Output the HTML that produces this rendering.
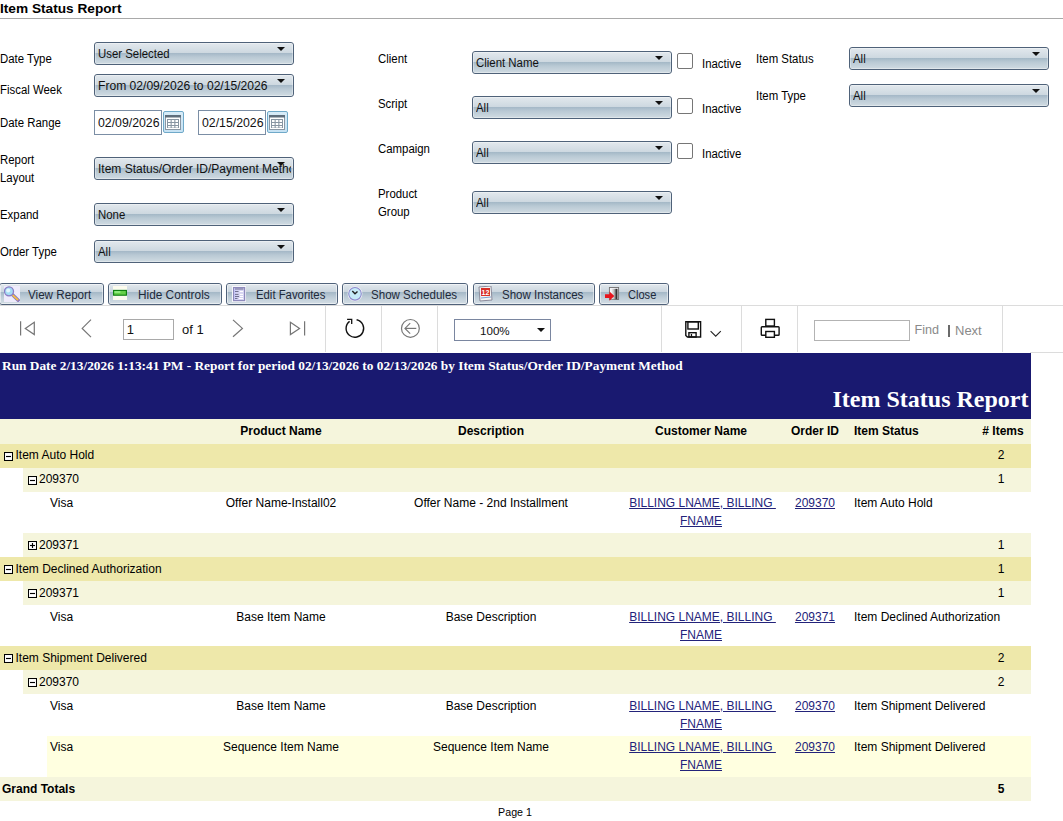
<!DOCTYPE html><html><head><meta charset="utf-8"><style>
*{margin:0;padding:0;box-sizing:content-box}
html,body{width:1063px;height:821px;overflow:hidden;background:#fff}
body{position:relative;font-family:"Liberation Sans", sans-serif}
.t{position:absolute;white-space:nowrap}
.dd{position:absolute;border:1px solid #4f6279;border-radius:3px;overflow:hidden;
 background:linear-gradient(to bottom,#e2e8ed 0px,#cdd8e0 10px,#a3b7c6 10px,#b9c9d4 14px,#d0dbe2 21px)}
.ddi{position:absolute;left:0;top:0;right:0;bottom:0;border:1px solid rgba(255,255,255,0.35);border-radius:1px}
.ddt{position:absolute;left:3px;top:4px;font-size:12px;line-height:15px;color:#111;white-space:nowrap;overflow:hidden;transform:scaleX(0.95);transform-origin:left top}
.arr{position:absolute;top:4px;width:0;height:0;border-left:4px solid transparent;border-right:4px solid transparent;border-top:4px solid #111}
.di{position:absolute;width:66px;height:23px;border:1px solid #7b8ea5;background:#fff}
.dit{position:absolute;left:3px;top:5px;font-size:12.3px;line-height:14px;color:#111}
.cal{position:absolute;width:19px;height:20px;border:1px solid #6fa9c9;border-radius:2px;background:linear-gradient(#d8ecf8,#c6e2f3)}
.btn{position:absolute;top:283px;height:20px;border:1px solid #50627a;border-radius:3px;overflow:hidden;
 background:linear-gradient(to bottom,#e2e8ed 0px,#cad5de 8px,#a3b7c6 8px,#bccbd6 13px,#d4dee5 20px)}
.bi{position:absolute;left:0;top:0;right:0;bottom:0;border:1px solid rgba(255,255,255,0.5)}
</style></head><body><div class="t" style="left:0px;top:2.68px;font-size:12.9px;line-height:12.9px;font-weight:bold;font-family:'Liberation Sans', sans-serif;color:#000;transform:scaleX(1.06);transform-origin:left top;">Item Status Report</div>
<div style="position:absolute;left:0px;top:18px;width:1063px;height:1px;background:#a9a9a9"></div>
<div class="t" style="left:0px;top:52.54px;font-size:12px;line-height:12px;font-weight:normal;font-family:'Liberation Sans', sans-serif;color:#000;transform:scaleX(0.95);transform-origin:left top;">Date Type</div>
<div class="t" style="left:0px;top:84.34px;font-size:12px;line-height:12px;font-weight:normal;font-family:'Liberation Sans', sans-serif;color:#000;transform:scaleX(0.95);transform-origin:left top;">Fiscal Week</div>
<div class="t" style="left:0px;top:116.74px;font-size:12px;line-height:12px;font-weight:normal;font-family:'Liberation Sans', sans-serif;color:#000;transform:scaleX(0.95);transform-origin:left top;">Date Range</div>
<div class="t" style="left:0px;top:153.84px;font-size:12px;line-height:12px;font-weight:normal;font-family:'Liberation Sans', sans-serif;color:#000;transform:scaleX(0.95);transform-origin:left top;">Report</div>
<div class="t" style="left:0px;top:171.84px;font-size:12px;line-height:12px;font-weight:normal;font-family:'Liberation Sans', sans-serif;color:#000;transform:scaleX(0.95);transform-origin:left top;">Layout</div>
<div class="t" style="left:0px;top:208.74px;font-size:12px;line-height:12px;font-weight:normal;font-family:'Liberation Sans', sans-serif;color:#000;transform:scaleX(0.95);transform-origin:left top;">Expand</div>
<div class="t" style="left:0px;top:245.74px;font-size:12px;line-height:12px;font-weight:normal;font-family:'Liberation Sans', sans-serif;color:#000;transform:scaleX(0.95);transform-origin:left top;">Order Type</div>
<div class="dd" style="left:94px;top:42px;width:198px;height:21px"><div class="ddi"></div><div class="ddt" style="width:203.2px;">User Selected</div><div class="arr" style="left:182px"></div></div>
<div class="dd" style="left:94px;top:74px;width:198px;height:21px"><div class="ddi"></div><div class="ddt" style="width:193.0px;font-size:12.1px;transform:none;">From 02/09/2026 to 02/15/2026</div><div class="arr" style="left:182px"></div></div>
<div class="dd" style="left:94px;top:157px;width:198px;height:21px"><div class="ddi"></div><div class="ddt" style="width:193.0px;font-size:12px;transform:none;">Item Status/Order ID/Payment Method</div><div class="arr" style="left:182px"></div></div>
<div class="dd" style="left:94px;top:203px;width:198px;height:21px"><div class="ddi"></div><div class="ddt" style="width:203.2px;">None</div><div class="arr" style="left:182px"></div></div>
<div class="dd" style="left:94px;top:240px;width:198px;height:21px"><div class="ddi"></div><div class="ddt" style="width:203.2px;">All</div><div class="arr" style="left:182px"></div></div>
<div class="di" style="left:94px;top:110px"><div class="dit">02/09/2026</div></div>
<div class="cal" style="left:163px;top:111px"><svg width="16" height="15" viewBox="0 0 16 15" style="position:absolute;left:1px;top:3px"><rect x="0.5" y="0.5" width="15" height="14" fill="#fff" stroke="#8a96a3"/><rect x="0" y="0" width="16" height="2.5" fill="#5f6e7c"/><rect x="2" y="4" width="12" height="9" fill="#8895a2"/><g fill="#fff"><rect x="3" y="5" width="2.6" height="2"/><rect x="6.7" y="5" width="2.6" height="2"/><rect x="10.4" y="5" width="2.6" height="2"/><rect x="3" y="8" width="2.6" height="2"/><rect x="6.7" y="8" width="2.6" height="2"/><rect x="10.4" y="8" width="2.6" height="2"/><rect x="3" y="11" width="2.6" height="1.6"/><rect x="6.7" y="11" width="2.6" height="1.6"/><rect x="10.4" y="11" width="2.6" height="1.6"/></g></svg></div>
<div class="di" style="left:198px;top:110px"><div class="dit">02/15/2026</div></div>
<div class="cal" style="left:267px;top:111px"><svg width="16" height="15" viewBox="0 0 16 15" style="position:absolute;left:1px;top:3px"><rect x="0.5" y="0.5" width="15" height="14" fill="#fff" stroke="#8a96a3"/><rect x="0" y="0" width="16" height="2.5" fill="#5f6e7c"/><rect x="2" y="4" width="12" height="9" fill="#8895a2"/><g fill="#fff"><rect x="3" y="5" width="2.6" height="2"/><rect x="6.7" y="5" width="2.6" height="2"/><rect x="10.4" y="5" width="2.6" height="2"/><rect x="3" y="8" width="2.6" height="2"/><rect x="6.7" y="8" width="2.6" height="2"/><rect x="10.4" y="8" width="2.6" height="2"/><rect x="3" y="11" width="2.6" height="1.6"/><rect x="6.7" y="11" width="2.6" height="1.6"/><rect x="10.4" y="11" width="2.6" height="1.6"/></g></svg></div>
<div class="t" style="left:377.5px;top:52.94px;font-size:12px;line-height:12px;font-weight:normal;font-family:'Liberation Sans', sans-serif;color:#000;transform:scaleX(0.95);transform-origin:left top;">Client</div>
<div class="t" style="left:377.5px;top:98.34px;font-size:12px;line-height:12px;font-weight:normal;font-family:'Liberation Sans', sans-serif;color:#000;transform:scaleX(0.95);transform-origin:left top;">Script</div>
<div class="t" style="left:377.5px;top:142.94px;font-size:12px;line-height:12px;font-weight:normal;font-family:'Liberation Sans', sans-serif;color:#000;transform:scaleX(0.95);transform-origin:left top;">Campaign</div>
<div class="t" style="left:377.5px;top:188.44px;font-size:12px;line-height:12px;font-weight:normal;font-family:'Liberation Sans', sans-serif;color:#000;transform:scaleX(0.95);transform-origin:left top;">Product</div>
<div class="t" style="left:377.5px;top:205.84px;font-size:12px;line-height:12px;font-weight:normal;font-family:'Liberation Sans', sans-serif;color:#000;transform:scaleX(0.95);transform-origin:left top;">Group</div>
<div class="dd" style="left:472px;top:51px;width:198px;height:21px"><div class="ddi"></div><div class="ddt" style="width:203.2px;">Client Name</div><div class="arr" style="left:182px"></div></div>
<div class="dd" style="left:472px;top:96px;width:198px;height:21px"><div class="ddi"></div><div class="ddt" style="width:203.2px;">All</div><div class="arr" style="left:182px"></div></div>
<div class="dd" style="left:472px;top:141px;width:198px;height:21px"><div class="ddi"></div><div class="ddt" style="width:203.2px;">All</div><div class="arr" style="left:182px"></div></div>
<div class="dd" style="left:472px;top:191px;width:198px;height:21px"><div class="ddi"></div><div class="ddt" style="width:203.2px;">All</div><div class="arr" style="left:182px"></div></div>
<div style="position:absolute;left:677px;top:53px;width:14px;height:14px;border:1px solid #767676;border-radius:2px;background:#fff"></div>
<div class="t" style="left:701.5px;top:58.14px;font-size:12px;line-height:12px;font-weight:normal;font-family:'Liberation Sans', sans-serif;color:#000;transform:scaleX(0.95);transform-origin:left top;">Inactive</div>
<div style="position:absolute;left:677px;top:98px;width:14px;height:14px;border:1px solid #767676;border-radius:2px;background:#fff"></div>
<div class="t" style="left:701.5px;top:103.14px;font-size:12px;line-height:12px;font-weight:normal;font-family:'Liberation Sans', sans-serif;color:#000;transform:scaleX(0.95);transform-origin:left top;">Inactive</div>
<div style="position:absolute;left:677px;top:143px;width:14px;height:14px;border:1px solid #767676;border-radius:2px;background:#fff"></div>
<div class="t" style="left:701.5px;top:148.14px;font-size:12px;line-height:12px;font-weight:normal;font-family:'Liberation Sans', sans-serif;color:#000;transform:scaleX(0.95);transform-origin:left top;">Inactive</div>
<div class="t" style="left:755.5px;top:53.24px;font-size:12px;line-height:12px;font-weight:normal;font-family:'Liberation Sans', sans-serif;color:#000;transform:scaleX(0.95);transform-origin:left top;">Item Status</div>
<div class="t" style="left:755.5px;top:89.74px;font-size:12px;line-height:12px;font-weight:normal;font-family:'Liberation Sans', sans-serif;color:#000;transform:scaleX(0.95);transform-origin:left top;">Item Type</div>
<div class="dd" style="left:849px;top:47px;width:198px;height:21px"><div class="ddi"></div><div class="ddt" style="width:203.2px;">All</div><div class="arr" style="left:182px"></div></div>
<div class="dd" style="left:849px;top:84px;width:198px;height:21px"><div class="ddi"></div><div class="ddt" style="width:203.2px;">All</div><div class="arr" style="left:182px"></div></div>
<div class="btn" style="left:-1px;width:103px"><div class="bi"></div><div style="position:absolute;left:4px;top:2px;width:16px;height:16px"><svg width="16" height="16" viewBox="0 0 16 16"><rect width="16" height="16" fill="#eeebfb"/><line x1="8.3" y1="8.6" x2="14.2" y2="14.2" stroke="#8a78c0" stroke-width="3.4" stroke-linecap="round"/><line x1="9" y1="9.3" x2="13.6" y2="13.6" stroke="#f8c040" stroke-width="1.7" stroke-linecap="round"/><circle cx="5" cy="5.3" r="4.5" fill="#a4dcf4" stroke="#8a7cc4" stroke-width="1.3"/><circle cx="4.2" cy="4.4" r="2" fill="#e4f6fd"/></svg></div></div>
<div class="t" style="left:28px;top:288.84px;font-size:12px;line-height:12px;font-weight:normal;font-family:'Liberation Sans', sans-serif;color:#1e2a3a;transform:scaleX(0.97);transform-origin:left top;">View Report</div>
<div class="btn" style="left:108px;width:112px"><div class="bi"></div><div style="position:absolute;left:4px;top:2px;width:16px;height:16px"><svg width="16" height="16" viewBox="0 0 16 16"><rect width="14" height="14" fill="#fcfbee"/><rect x="0" y="3.5" width="14" height="6.5" fill="#f8fff8"/><rect x="0.6" y="4.4" width="12.8" height="4.8" fill="#66d048" stroke="#0a7a0a" stroke-width="1.1"/><rect x="1.4" y="5.2" width="6" height="1.6" fill="#98f088"/></svg></div></div>
<div class="t" style="left:138px;top:288.84px;font-size:12px;line-height:12px;font-weight:normal;font-family:'Liberation Sans', sans-serif;color:#1e2a3a;transform:scaleX(0.986);transform-origin:left top;">Hide Controls</div>
<div class="btn" style="left:226px;width:110px"><div class="bi"></div><div style="position:absolute;left:4px;top:2px;width:16px;height:16px"><svg width="16" height="16" viewBox="0 0 16 16"><rect x="1" y="0" width="14" height="16" fill="#f6f6fa"/><rect x="2.6" y="1.6" width="11" height="13" fill="#d6d4f2" stroke="#8e8abc" stroke-width="1.2"/><rect x="3.5" y="2.5" width="1.2" height="11" fill="#c8c8ff"/><line x1="4" y1="3" x2="12.5" y2="3" stroke="#6a6890" stroke-width="1"/><g stroke="#707090" stroke-width="1"><line x1="4" y1="5.5" x2="7.5" y2="5.5"/><line x1="4" y1="8.4" x2="7.5" y2="8.4"/><line x1="4" y1="10.5" x2="8" y2="10.5"/><line x1="4" y1="12.5" x2="6.5" y2="12.5"/></g><g stroke="#fff" stroke-width="1"><line x1="8.7" y1="5.5" x2="12" y2="5.5"/><line x1="8.7" y1="8.4" x2="12" y2="8.4"/><line x1="9" y1="10.5" x2="12" y2="10.5"/><line x1="8" y1="12.5" x2="12" y2="12.5"/></g></svg></div></div>
<div class="t" style="left:256px;top:288.84px;font-size:12px;line-height:12px;font-weight:normal;font-family:'Liberation Sans', sans-serif;color:#1e2a3a;transform:scaleX(0.945);transform-origin:left top;">Edit Favorites</div>
<div class="btn" style="left:342px;width:124px"><div class="bi"></div><div style="position:absolute;left:4px;top:2px;width:16px;height:16px"><svg width="16" height="16" viewBox="0 0 16 16"><circle cx="8" cy="7.8" r="7.4" fill="#f4f6fa"/><circle cx="8" cy="7.8" r="6.3" fill="#c6eaf8" stroke="#8c88cc" stroke-width="1.1"/><polyline points="5.3,4.9 8,7.8 10.5,5.5" fill="none" stroke="#222" stroke-width="1.4"/></svg></div></div>
<div class="t" style="left:371px;top:288.84px;font-size:12px;line-height:12px;font-weight:normal;font-family:'Liberation Sans', sans-serif;color:#1e2a3a;transform:scaleX(0.963);transform-origin:left top;">Show Schedules</div>
<div class="btn" style="left:473px;width:120px"><div class="bi"></div><div style="position:absolute;left:4px;top:2px;width:16px;height:16px"><svg width="16" height="16" viewBox="0 0 16 16"><path d="M1 1 L13 0 L14 14 L2 15 Z" fill="#f4f4f4" stroke="#8a8a9a"/><rect x="3" y="2" width="9" height="8" fill="#d83028"/><text x="7.5" y="8.8" font-size="7" font-family="Liberation Sans" font-weight="bold" fill="#fff" text-anchor="middle">12</text><line x1="3" y1="12" x2="13" y2="11" stroke="#7aa0d0"/></svg></div></div>
<div class="t" style="left:501.5px;top:288.84px;font-size:12px;line-height:12px;font-weight:normal;font-family:'Liberation Sans', sans-serif;color:#1e2a3a;transform:scaleX(0.96);transform-origin:left top;">Show Instances</div>
<div class="btn" style="left:599px;width:68px"><div class="bi"></div><div style="position:absolute;left:4px;top:2px;width:16px;height:16px"><svg width="16" height="16" viewBox="0 0 16 16"><defs><linearGradient id="dg" x1="0" x2="1"><stop offset="0" stop-color="#fff"/><stop offset="0.5" stop-color="#bbb"/><stop offset="1" stop-color="#000"/></linearGradient></defs><rect x="5.4" y="1.5" width="9.2" height="12" fill="#f4f4f8" stroke="#707070" stroke-width="0.9"/><rect x="6.8" y="2.8" width="6.6" height="10.4" fill="url(#dg)"/><path d="M1 8.2 L5.5 8.2 L5.5 5.4 L10.3 10.1 L5.5 14.7 L5.5 11.9 L1 11.9 Z" fill="#e8141c"/></svg></div></div>
<div class="t" style="left:628px;top:288.84px;font-size:12px;line-height:12px;font-weight:normal;font-family:'Liberation Sans', sans-serif;color:#1e2a3a;transform:scaleX(0.923);transform-origin:left top;">Close</div>
<div style="position:absolute;left:0px;top:305px;width:1063px;height:1px;background:#dcdcdc"></div>
<div style="position:absolute;left:1030px;top:352px;width:33px;height:1px;background:#dcdcdc"></div>
<div style="position:absolute;left:325px;top:306px;width:1px;height:46px;background:#dcdcdc"></div>
<div style="position:absolute;left:381px;top:306px;width:1px;height:46px;background:#dcdcdc"></div>
<div style="position:absolute;left:437px;top:306px;width:1px;height:46px;background:#dcdcdc"></div>
<div style="position:absolute;left:661px;top:306px;width:1px;height:46px;background:#dcdcdc"></div>
<div style="position:absolute;left:741px;top:306px;width:1px;height:46px;background:#dcdcdc"></div>
<div style="position:absolute;left:797px;top:306px;width:1px;height:46px;background:#dcdcdc"></div>
<div style="position:absolute;left:1002px;top:306px;width:1px;height:46px;background:#dcdcdc"></div>
<svg width="1063" height="50" style="position:absolute;left:0;top:305px" viewBox="0 305 1063 50"><g stroke="#767676" stroke-width="1.2" fill="none"><line x1="20.6" y1="321.3" x2="20.6" y2="335.4"/><path d="M34.3 322.3 L25.3 328.4 L34.3 334.6 Z"/><polyline points="91,319.6 82.2,328.4 91,337.2"/><polyline points="233,319.9 242.4,328.4 233,336.8"/><path d="M290.4 322.3 L299.6 328.4 L290.4 334.6 Z"/><line x1="304.6" y1="321.3" x2="304.6" y2="335.4"/></g><g fill="none" stroke="#111" stroke-width="1.4"><path d="M356.6 319.8 A8.8 8.8 0 1 1 349.6 321.4"/><polyline points="347.1,319.4 351.7,319.4 351.7,323.9" stroke-width="1.3"/></g><g fill="none" stroke="#777" stroke-width="1.2"><circle cx="410.4" cy="328.4" r="8.9"/><line x1="405" y1="328.4" x2="416.3" y2="328.4"/><polyline points="410.2,323.2 405,328.4 410.2,333.6"/></g><g fill="none" stroke="#111" stroke-width="1.4"><path d="M685.8 321.8 H700.6 V337 H687.4 L685.8 335.4 Z"/><rect x="687.9" y="321.8" width="10.4" height="7.2"/><rect x="688.9" y="332.7" width="7.2" height="4.3"/><polyline points="710.6,331.2 715.7,336.2 720.8,331.2" stroke="#222" stroke-width="1.1"/></g><rect x="690.8" y="334" width="1.3" height="3" fill="#111"/><g fill="#fff" stroke="#111" stroke-width="1.4"><rect x="765.8" y="319.4" width="8.6" height="6.6"/><rect x="761.3" y="326.7" width="17.8" height="8.5" rx="0.8"/><rect x="765.8" y="331.5" width="8.6" height="5.8"/></g></svg>
<div style="position:absolute;left:123px;top:319px;width:49px;height:19px;border:1px solid #a9a9a9;background:#fff"></div>
<div class="t" style="left:126.8px;top:323.00px;font-size:13px;line-height:13px;font-weight:normal;font-family:'Liberation Sans', sans-serif;color:#111;">1</div>
<div class="t" style="left:182px;top:322.70px;font-size:13px;line-height:13px;font-weight:normal;font-family:'Liberation Sans', sans-serif;color:#111;">of 1</div>
<div style="position:absolute;left:454px;top:319px;width:95px;height:20px;border:1px solid #7a86a0;background:#fff"></div>
<div class="t" style="left:480px;top:324.98px;font-size:11.6px;line-height:11.6px;font-weight:normal;font-family:'Liberation Sans', sans-serif;color:#111;">100%</div>
<div style="position:absolute;left:537px;top:327.5px;width:0;height:0;border-left:4px solid transparent;border-right:4px solid transparent;border-top:4.5px solid #111"></div>
<div style="position:absolute;left:814px;top:320px;width:94px;height:19px;border:1px solid #b3b3b3;background:#fff"></div>
<div class="t" style="left:914.5px;top:324.03px;font-size:12.6px;line-height:12.6px;font-weight:normal;font-family:'Liberation Sans', sans-serif;color:#8a8a8a;">Find</div>
<div style="position:absolute;left:948px;top:325px;width:1.6px;height:12px;background:#6a6a6a"></div>
<div class="t" style="left:955px;top:323.70px;font-size:13px;line-height:13px;font-weight:normal;font-family:'Liberation Sans', sans-serif;color:#8a8a8a;">Next</div>
<div style="position:absolute;left:0px;top:353px;width:1031px;height:66px;background:#191970"></div>
<div class="t" style="left:2px;top:358.73px;font-size:13.333px;line-height:13.333px;font-weight:bold;font-family:'Liberation Serif', serif;color:#fff;white-space:nowrap">Run Date 2/13/2026 1:13:41 PM - Report for period 02/13/2026 to 02/13/2026 by Item Status/Order ID/Payment Method</div>
<div class="t" style="left:628.5px;width:400px;text-align:right;top:386.80px;font-size:24px;line-height:24px;font-weight:bold;font-family:'Liberation Serif', serif;color:#fff;">Item Status Report</div>
<div style="position:absolute;left:0px;top:419px;width:1031px;height:25px;background:#f5f5dc"></div>
<div class="t" style="left:81.0px;width:400px;text-align:center;top:424.54px;font-size:12px;line-height:12px;font-weight:bold;font-family:'Liberation Sans', sans-serif;color:#000;">Product Name</div>
<div class="t" style="left:291.0px;width:400px;text-align:center;top:424.54px;font-size:12px;line-height:12px;font-weight:bold;font-family:'Liberation Sans', sans-serif;color:#000;">Description</div>
<div class="t" style="left:501.0px;width:400px;text-align:center;top:424.54px;font-size:12px;line-height:12px;font-weight:bold;font-family:'Liberation Sans', sans-serif;color:#000;">Customer Name</div>
<div class="t" style="left:615.0px;width:400px;text-align:center;top:424.54px;font-size:12px;line-height:12px;font-weight:bold;font-family:'Liberation Sans', sans-serif;color:#000;">Order ID</div>
<div class="t" style="left:854px;top:424.54px;font-size:12px;line-height:12px;font-weight:bold;font-family:'Liberation Sans', sans-serif;color:#000;">Item Status</div>
<div class="t" style="left:953.0px;width:100px;text-align:center;top:424.54px;font-size:12px;line-height:12px;font-weight:bold;font-family:'Liberation Sans', sans-serif;color:#000;"># Items</div>
<div style="position:absolute;left:0px;top:444px;width:1031px;height:24px;background:#eee8aa"></div>
<svg width="9" height="9" style="position:absolute;left:4px;top:452px" viewBox="0 0 9 9"><rect x="0.5" y="0.5" width="8" height="8" fill="#fff" stroke="#000" stroke-width="1.05"/><line x1="2" y1="4.5" x2="7" y2="4.5" stroke="#000" stroke-width="1.15"/></svg>
<div class="t" style="left:15.5px;top:448.84px;font-size:12px;line-height:12px;font-weight:normal;font-family:'Liberation Sans', sans-serif;color:#000;">Item Auto Hold</div>
<div class="t" style="left:981.0px;width:40px;text-align:center;top:448.84px;font-size:12px;line-height:12px;font-weight:normal;font-family:'Liberation Sans', sans-serif;color:#000;">2</div>
<div style="position:absolute;left:23px;top:468px;width:1008px;height:24px;background:#f5f5dc"></div>
<svg width="9" height="9" style="position:absolute;left:28px;top:476px" viewBox="0 0 9 9"><rect x="0.5" y="0.5" width="8" height="8" fill="#fff" stroke="#000" stroke-width="1.05"/><line x1="2" y1="4.5" x2="7" y2="4.5" stroke="#000" stroke-width="1.15"/></svg>
<div class="t" style="left:39px;top:472.84px;font-size:12px;line-height:12px;font-weight:normal;font-family:'Liberation Sans', sans-serif;color:#000;">209370</div>
<div class="t" style="left:981.0px;width:40px;text-align:center;top:472.84px;font-size:12px;line-height:12px;font-weight:normal;font-family:'Liberation Sans', sans-serif;color:#000;">1</div>
<div class="t" style="left:50px;top:496.84px;font-size:12px;line-height:12px;font-weight:normal;font-family:'Liberation Sans', sans-serif;color:#000;">Visa</div>
<div class="t" style="left:81.0px;width:400px;text-align:center;top:496.84px;font-size:12px;line-height:12px;font-weight:normal;font-family:'Liberation Sans', sans-serif;color:#000;">Offer Name-Install02</div>
<div class="t" style="left:291.0px;width:400px;text-align:center;top:496.84px;font-size:12px;line-height:12px;font-weight:normal;font-family:'Liberation Sans', sans-serif;color:#000;">Offer Name - 2nd Installment</div>
<div class="t" style="left:502.5px;width:400px;text-align:center;top:496.84px;font-size:12px;line-height:12px;font-weight:normal;font-family:'Liberation Sans', sans-serif;color:#23237a;white-space:nowrap"><u>BILLING LNAME, BILLING&nbsp;</u></div>
<div class="t" style="left:501.0px;width:400px;text-align:center;top:514.84px;font-size:12px;line-height:12px;font-weight:normal;font-family:'Liberation Sans', sans-serif;color:#23237a;"><u>FNAME</u></div>
<div class="t" style="left:615.0px;width:400px;text-align:center;top:496.84px;font-size:12px;line-height:12px;font-weight:normal;font-family:'Liberation Sans', sans-serif;color:#23237a;"><u>209370</u></div>
<div class="t" style="left:854px;top:496.84px;font-size:12px;line-height:12px;font-weight:normal;font-family:'Liberation Sans', sans-serif;color:#000;">Item Auto Hold</div>
<div style="position:absolute;left:23px;top:533px;width:1008px;height:24px;background:#f5f5dc"></div>
<svg width="9" height="9" style="position:absolute;left:28px;top:541px" viewBox="0 0 9 9"><rect x="0.5" y="0.5" width="8" height="8" fill="#fff" stroke="#000" stroke-width="1.05"/><line x1="2" y1="4.5" x2="7" y2="4.5" stroke="#000" stroke-width="1.15"/><line x1="4.5" y1="2" x2="4.5" y2="7" stroke="#000" stroke-width="1.15"/></svg>
<div class="t" style="left:39px;top:538.84px;font-size:12px;line-height:12px;font-weight:normal;font-family:'Liberation Sans', sans-serif;color:#000;">209371</div>
<div class="t" style="left:981.0px;width:40px;text-align:center;top:538.84px;font-size:12px;line-height:12px;font-weight:normal;font-family:'Liberation Sans', sans-serif;color:#000;">1</div>
<div style="position:absolute;left:0px;top:557px;width:1031px;height:24px;background:#eee8aa"></div>
<svg width="9" height="9" style="position:absolute;left:4px;top:565px" viewBox="0 0 9 9"><rect x="0.5" y="0.5" width="8" height="8" fill="#fff" stroke="#000" stroke-width="1.05"/><line x1="2" y1="4.5" x2="7" y2="4.5" stroke="#000" stroke-width="1.15"/></svg>
<div class="t" style="left:15.5px;top:562.84px;font-size:12px;line-height:12px;font-weight:normal;font-family:'Liberation Sans', sans-serif;color:#000;">Item Declined Authorization</div>
<div class="t" style="left:981.0px;width:40px;text-align:center;top:562.84px;font-size:12px;line-height:12px;font-weight:normal;font-family:'Liberation Sans', sans-serif;color:#000;">1</div>
<div style="position:absolute;left:23px;top:581px;width:1008px;height:24px;background:#f5f5dc"></div>
<svg width="9" height="9" style="position:absolute;left:28px;top:589px" viewBox="0 0 9 9"><rect x="0.5" y="0.5" width="8" height="8" fill="#fff" stroke="#000" stroke-width="1.05"/><line x1="2" y1="4.5" x2="7" y2="4.5" stroke="#000" stroke-width="1.15"/></svg>
<div class="t" style="left:39px;top:586.84px;font-size:12px;line-height:12px;font-weight:normal;font-family:'Liberation Sans', sans-serif;color:#000;">209371</div>
<div class="t" style="left:981.0px;width:40px;text-align:center;top:586.84px;font-size:12px;line-height:12px;font-weight:normal;font-family:'Liberation Sans', sans-serif;color:#000;">1</div>
<div class="t" style="left:50px;top:610.84px;font-size:12px;line-height:12px;font-weight:normal;font-family:'Liberation Sans', sans-serif;color:#000;">Visa</div>
<div class="t" style="left:81.0px;width:400px;text-align:center;top:610.84px;font-size:12px;line-height:12px;font-weight:normal;font-family:'Liberation Sans', sans-serif;color:#000;">Base Item Name</div>
<div class="t" style="left:291.0px;width:400px;text-align:center;top:610.84px;font-size:12px;line-height:12px;font-weight:normal;font-family:'Liberation Sans', sans-serif;color:#000;">Base Description</div>
<div class="t" style="left:502.5px;width:400px;text-align:center;top:610.84px;font-size:12px;line-height:12px;font-weight:normal;font-family:'Liberation Sans', sans-serif;color:#23237a;white-space:nowrap"><u>BILLING LNAME, BILLING&nbsp;</u></div>
<div class="t" style="left:501.0px;width:400px;text-align:center;top:628.84px;font-size:12px;line-height:12px;font-weight:normal;font-family:'Liberation Sans', sans-serif;color:#23237a;"><u>FNAME</u></div>
<div class="t" style="left:615.0px;width:400px;text-align:center;top:610.84px;font-size:12px;line-height:12px;font-weight:normal;font-family:'Liberation Sans', sans-serif;color:#23237a;"><u>209371</u></div>
<div class="t" style="left:854px;top:610.84px;font-size:12px;line-height:12px;font-weight:normal;font-family:'Liberation Sans', sans-serif;color:#000;">Item Declined Authorization</div>
<div style="position:absolute;left:0px;top:646px;width:1031px;height:24px;background:#eee8aa"></div>
<svg width="9" height="9" style="position:absolute;left:4px;top:654px" viewBox="0 0 9 9"><rect x="0.5" y="0.5" width="8" height="8" fill="#fff" stroke="#000" stroke-width="1.05"/><line x1="2" y1="4.5" x2="7" y2="4.5" stroke="#000" stroke-width="1.15"/></svg>
<div class="t" style="left:15.5px;top:651.84px;font-size:12px;line-height:12px;font-weight:normal;font-family:'Liberation Sans', sans-serif;color:#000;">Item Shipment Delivered</div>
<div class="t" style="left:981.0px;width:40px;text-align:center;top:651.84px;font-size:12px;line-height:12px;font-weight:normal;font-family:'Liberation Sans', sans-serif;color:#000;">2</div>
<div style="position:absolute;left:23px;top:670px;width:1008px;height:24px;background:#f5f5dc"></div>
<svg width="9" height="9" style="position:absolute;left:28px;top:678px" viewBox="0 0 9 9"><rect x="0.5" y="0.5" width="8" height="8" fill="#fff" stroke="#000" stroke-width="1.05"/><line x1="2" y1="4.5" x2="7" y2="4.5" stroke="#000" stroke-width="1.15"/></svg>
<div class="t" style="left:39px;top:675.84px;font-size:12px;line-height:12px;font-weight:normal;font-family:'Liberation Sans', sans-serif;color:#000;">209370</div>
<div class="t" style="left:981.0px;width:40px;text-align:center;top:675.84px;font-size:12px;line-height:12px;font-weight:normal;font-family:'Liberation Sans', sans-serif;color:#000;">2</div>
<div class="t" style="left:50px;top:699.84px;font-size:12px;line-height:12px;font-weight:normal;font-family:'Liberation Sans', sans-serif;color:#000;">Visa</div>
<div class="t" style="left:81.0px;width:400px;text-align:center;top:699.84px;font-size:12px;line-height:12px;font-weight:normal;font-family:'Liberation Sans', sans-serif;color:#000;">Base Item Name</div>
<div class="t" style="left:291.0px;width:400px;text-align:center;top:699.84px;font-size:12px;line-height:12px;font-weight:normal;font-family:'Liberation Sans', sans-serif;color:#000;">Base Description</div>
<div class="t" style="left:502.5px;width:400px;text-align:center;top:699.84px;font-size:12px;line-height:12px;font-weight:normal;font-family:'Liberation Sans', sans-serif;color:#23237a;white-space:nowrap"><u>BILLING LNAME, BILLING&nbsp;</u></div>
<div class="t" style="left:501.0px;width:400px;text-align:center;top:717.84px;font-size:12px;line-height:12px;font-weight:normal;font-family:'Liberation Sans', sans-serif;color:#23237a;"><u>FNAME</u></div>
<div class="t" style="left:615.0px;width:400px;text-align:center;top:699.84px;font-size:12px;line-height:12px;font-weight:normal;font-family:'Liberation Sans', sans-serif;color:#23237a;"><u>209370</u></div>
<div class="t" style="left:854px;top:699.84px;font-size:12px;line-height:12px;font-weight:normal;font-family:'Liberation Sans', sans-serif;color:#000;">Item Shipment Delivered</div>
<div style="position:absolute;left:47px;top:736px;width:984px;height:41px;background:#ffffe0"></div>
<div class="t" style="left:50px;top:740.84px;font-size:12px;line-height:12px;font-weight:normal;font-family:'Liberation Sans', sans-serif;color:#000;">Visa</div>
<div class="t" style="left:81.0px;width:400px;text-align:center;top:740.84px;font-size:12px;line-height:12px;font-weight:normal;font-family:'Liberation Sans', sans-serif;color:#000;">Sequence Item Name</div>
<div class="t" style="left:291.0px;width:400px;text-align:center;top:740.84px;font-size:12px;line-height:12px;font-weight:normal;font-family:'Liberation Sans', sans-serif;color:#000;">Sequence Item Name</div>
<div class="t" style="left:502.5px;width:400px;text-align:center;top:740.84px;font-size:12px;line-height:12px;font-weight:normal;font-family:'Liberation Sans', sans-serif;color:#23237a;white-space:nowrap"><u>BILLING LNAME, BILLING&nbsp;</u></div>
<div class="t" style="left:501.0px;width:400px;text-align:center;top:758.84px;font-size:12px;line-height:12px;font-weight:normal;font-family:'Liberation Sans', sans-serif;color:#23237a;"><u>FNAME</u></div>
<div class="t" style="left:615.0px;width:400px;text-align:center;top:740.84px;font-size:12px;line-height:12px;font-weight:normal;font-family:'Liberation Sans', sans-serif;color:#23237a;"><u>209370</u></div>
<div class="t" style="left:854px;top:740.84px;font-size:12px;line-height:12px;font-weight:normal;font-family:'Liberation Sans', sans-serif;color:#000;">Item Shipment Delivered</div>
<div style="position:absolute;left:0px;top:777px;width:1031px;height:24px;background:#f5f5dc"></div>
<div class="t" style="left:2px;top:782.84px;font-size:12px;line-height:12px;font-weight:bold;font-family:'Liberation Sans', sans-serif;color:#000;">Grand Totals</div>
<div class="t" style="left:981.0px;width:40px;text-align:center;top:782.84px;font-size:12px;line-height:12px;font-weight:bold;font-family:'Liberation Sans', sans-serif;color:#000;">5</div>
<div class="t" style="left:465.0px;width:100px;text-align:center;top:806.67px;font-size:10.667px;line-height:10.667px;font-weight:normal;font-family:'Liberation Sans', sans-serif;color:#000;">Page 1</div></body></html>
